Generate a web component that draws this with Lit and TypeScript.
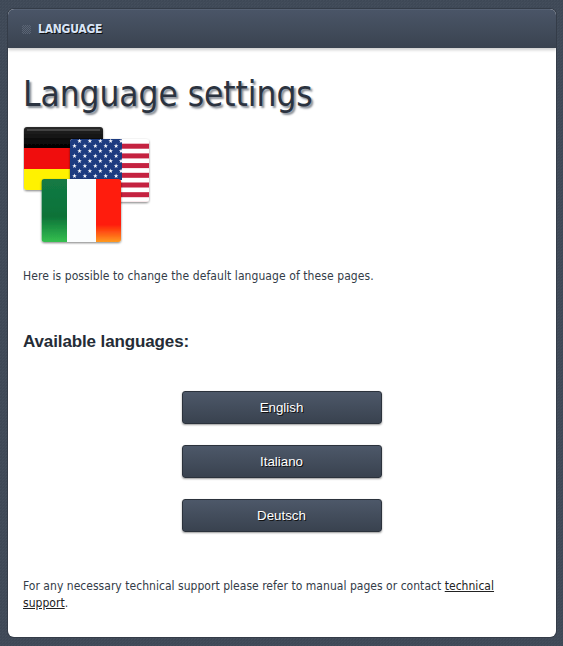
import { LitElement, html, css, svg } from "lit";
import { customElement } from "lit/decorators.js";

const star = (x: number, y: number) => {
  const pts: string[] = [];
  for (let i = 0; i < 10; i++) {
    const r = i % 2 ? 1.0 : 2.4;
    const a = -Math.PI / 2 + (i * Math.PI) / 5;
    pts.push(`${(x + r * Math.cos(a)).toFixed(2)},${(y + r * Math.sin(a)).toFixed(2)}`);
  }
  return svg`<polygon points=${pts.join(" ")} fill="#f4f6fa" />`;
};

const stars = () => {
  const out = [];
  for (let r = 0; r < 8; r++) {
    const odd = r % 2 === 1;
    for (let c = 0; c < 5; c++) {
      out.push(star(79.5 + (odd ? -5 : 0) + c * 10.4, 141 + r * 5));
    }
  }
  return out;
};

@customElement("app-root")
export class AppRoot extends LitElement {
  static styles = css`
    :host {
      display: block;
      min-height: 646px;
      box-sizing: border-box;
      padding: 9px 7px 9px 8px;
      background-color: #404a58;
      background-image:
        linear-gradient(45deg, rgba(255, 255, 255, 0.025) 25%, transparent 25%, transparent 75%, rgba(255, 255, 255, 0.025) 75%),
        linear-gradient(45deg, rgba(0, 0, 0, 0.04) 25%, transparent 25%, transparent 75%, rgba(0, 0, 0, 0.04) 75%);
      background-size: 3px 3px;
      background-position: 0 0, 1px 1px;
      font-family: "DejaVu Sans", Tahoma, sans-serif;
      font-stretch: condensed;
    }
    .card {
      height: 628px;
      box-sizing: border-box;
      display: flex;
      flex-direction: column;
      border-radius: 6px;
      background: #fff;
      box-shadow: 0 0 0 1px #343c48;
      overflow: hidden;
    }
    .head {
      flex: none;
      height: 39px;
      display: flex;
      align-items: center;
      gap: 7px;
      padding-left: 14px;
      box-sizing: border-box;
      background: linear-gradient(#4a5567, #3a4350);
      border-top: 1px solid #566173;
      box-shadow: 0 2px 3px rgba(0, 0, 0, 0.2);
      position: relative;
    }
    .grip {
      width: 9px;
      height: 9px;
      background: repeating-conic-gradient(#5b6575 0 25%, transparent 0 50%) 0 0 / 2px 2px;
    }
    .head-title {
      font-size: 12px;
      font-weight: 700;
      letter-spacing: -0.25px;
      color: #d8e4f6;
      text-shadow: 1px 1px 0 #111;
    }
    .body {
      flex: 1;
      display: flex;
      flex-direction: column;
      padding: 24px 15px 0;
      color: #333c48;
    }
    h1 {
      margin: 0;
      font-weight: 400;
      font-size: 35px;
      line-height: 44px;
      letter-spacing: -0.08px;
      color: #2b3340;
      text-shadow: 2px 2px 2px #878d96;
    }
    .flags {
      display: block;
      margin-top: 9px;
      width: 130px;
      height: 120px;
    }
    .intro {
      margin: 23px 0 0;
      font-size: 12px;
      line-height: 16px;
      letter-spacing: 0.08px;
    }
    h2 {
      margin: 48px 0 0;
      font-family: "Liberation Sans", Arial, sans-serif;
      font-stretch: normal;
      font-size: 17px;
      line-height: 20px;
      font-weight: 700;
      letter-spacing: -0.12px;
      color: #252c36;
    }
    .langs {
      margin-top: 39px;
      display: flex;
      flex-direction: column;
      align-items: center;
      gap: 21px;
    }
    button {
      width: 200px;
      height: 33px;
      padding: 0;
      margin-right: 1px;
      border: 1px solid #2b323c;
      border-radius: 3px;
      background: linear-gradient(#4d5869, #39424f);
      color: #fff;
      font-family: "Liberation Sans", Arial, sans-serif;
      font-stretch: normal;
      font-size: 13.33px;
      text-shadow: 1px 1px 0 #111;
      box-shadow: 0 1px 2px rgba(0, 0, 0, 0.4);
    }
    .foot {
      margin: 46px 0 0;
      font-size: 12px;
      line-height: 17px;
      letter-spacing: 0.03px;
    }
    a {
      color: #222;
      text-decoration: underline;
    }
  `;

  render() {
    return html`
      <div class="card">
        <div class="head">
          <span class="grip"></span>
          <span class="head-title">LANGUAGE</span>
        </div>
        <div class="body">
          <h1>Language settings</h1>
          <svg class="flags" viewBox="23 125 130 120" aria-hidden="true">
            <defs>
              <linearGradient id="it-g" x1="0" y1="0" x2="0" y2="1">
                <stop offset="0" stop-color="#137a45" />
                <stop offset=".6" stop-color="#0c7238" />
                <stop offset="1" stop-color="#35c050" />
              </linearGradient>
              <linearGradient id="it-r" x1="0" y1="0" x2="0" y2="1">
                <stop offset="0" stop-color="#ff1c10" />
                <stop offset=".72" stop-color="#ff1a08" />
                <stop offset="1" stop-color="#ff9a20" />
              </linearGradient>
              <linearGradient id="de-k" x1="0" y1="0" x2="0" y2="1">
                <stop offset="0" stop-color="#2a2a2a" />
                <stop offset=".35" stop-color="#181818" />
                <stop offset="1" stop-color="#000" />
              </linearGradient>
              <clipPath id="c-de"><rect x="24" y="127" width="79" height="63" rx="3" /></clipPath>
              <clipPath id="c-us"><rect x="70" y="139" width="79" height="63" rx="3" /></clipPath>
              <clipPath id="c-it"><rect x="41.5" y="179" width="79.5" height="63" rx="3" /></clipPath>
              <filter id="sh" x="-10%" y="-10%" width="120%" height="120%">
                <feDropShadow dx="0" dy="1" stdDeviation="1" flood-color="#000" flood-opacity=".5" />
              </filter>
            </defs>
            <g filter="url(#sh)">
              <g clip-path="url(#c-de)">
                <rect x="24" y="127" width="79" height="21" fill="url(#de-k)" />
                <rect x="24" y="148" width="79" height="21" fill="#f01010" />
                <rect x="24" y="169" width="79" height="21" fill="#fff200" />
                <rect x="27" y="129.5" width="73" height="1" fill="#fff" opacity=".3" />
              </g>
            </g>
            <g filter="url(#sh)">
              <g clip-path="url(#c-us)">
                <rect x="70" y="139" width="79" height="63" fill="#fff" />
                ${[0, 1, 2, 3, 4, 5, 6].map(
                  (i) => svg`<rect x="70" y=${139 + i * 9.7 + 4.7} width="79" height="5" fill="#c4203f" />`
                )}
                <rect x="70" y="139" width="52" height="41" fill="#1c3a80" />
                ${stars()}
              </g>
            </g>
            <g filter="url(#sh)">
              <g clip-path="url(#c-it)">
                <rect x="41.5" y="179" width="26" height="63" fill="url(#it-g)" />
                <rect x="67" y="179" width="30" height="63" fill="#fbfdfe" />
                <rect x="96" y="179" width="25" height="63" fill="url(#it-r)" />
              </g>
            </g>
          </svg>
          <p class="intro">Here is possible to change the default language of these pages.</p>
          <h2>Available languages:</h2>
          <div class="langs">
            <button>English</button>
            <button>Italiano</button>
            <button>Deutsch</button>
          </div>
          <p class="foot">
            For any necessary technical support please refer to manual pages or contact
            <a href="#">technical support</a>.
          </p>
        </div>
      </div>
    `;
  }
}
